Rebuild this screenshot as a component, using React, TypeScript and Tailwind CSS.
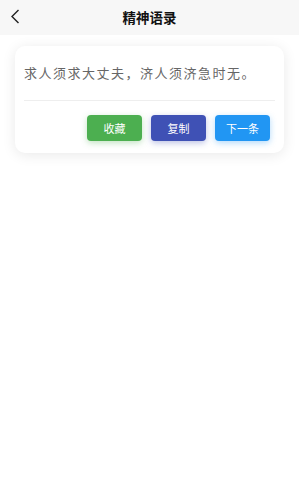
const font = { fontFamily: '"Noto Sans CJK SC", "Noto Sans", sans-serif' };

export default function App() {
  return (
    <div className="min-h-[500px] bg-white" style={font}>
      {/* Header */}
      <header className="relative flex h-[35px] items-center justify-center bg-[#f7f7f7]">
        <svg className="absolute left-[10px] top-[9px] h-[15px] w-[10px]" viewBox="0 0 10 15" fill="none">
          <path d="M8.5 1 L2 7.5 L8.5 14" stroke="#222" strokeWidth="1.4" />
        </svg>
        <h1 className="text-[13.5px] font-bold text-[#111]">精神语录</h1>
      </header>

      {/* Quote card */}
      <div className="mx-[15px] mt-[11px] rounded-[10px] bg-white px-[9px] pt-[17px] pb-[12px] shadow-[0_2px_14px_rgba(0,0,0,0.09)]">
        <p className="whitespace-nowrap text-[13px] leading-[20px] tracking-[1.5px] text-[#666]">求人须求大丈夫，济人须济急时无。</p>
        <div className="mt-[17px] h-px bg-[#eeeeee]" />
        <div className="mt-[14px] flex justify-end gap-[9px] pr-[5px]">
          <button className="h-[26px] w-[55px] rounded-[4px] bg-[#4caf50] text-[11px] text-white shadow-[0_2px_6px_rgba(76,175,80,0.35)]">
            收藏
          </button>
          <button className="h-[26px] w-[55px] rounded-[4px] bg-[#3f51b5] text-[11px] text-white shadow-[0_2px_6px_rgba(63,81,181,0.35)]">
            复制
          </button>
          <button className="h-[26px] w-[55px] rounded-[4px] bg-[#2196f3] text-[11px] text-white shadow-[0_2px_6px_rgba(33,150,243,0.35)]">
            下一条
          </button>
        </div>
      </div>
    </div>
  );
}
